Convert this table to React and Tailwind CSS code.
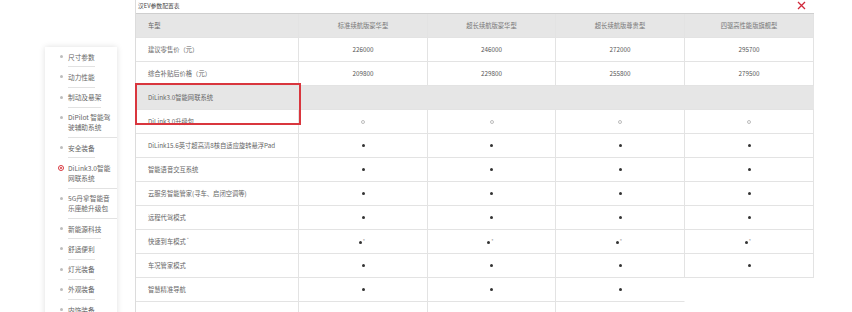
import React from 'react';

const menu = [
  { label: '尺寸参数' },
  { label: '动力性能' },
  { label: '制动及悬架' },
  { lines: ['DiPilot 智能驾', '驶辅助系统'] },
  { label: '安全装备' },
  { lines: ['DiLink3.0智能', '网联系统'], active: true },
  { lines: ['5G丹拿智能音', '乐座舱升级包'] },
  { label: '新能源科技' },
  { label: '舒适便利' },
  { label: '灯光装备' },
  { label: '外观装备' },
  { label: '内饰装备' },
];

const models = ['标准续航版豪华型', '超长续航版豪华型', '超长续航版尊贵型', '四驱高性能版旗舰型'];

const priceRows = [
  ['建议零售价（元）', '226000', '246000', '272000', '295700'],
  ['综合补贴后价格（元）', '209800', '229800', '255800', '279500'],
];

// o = hollow, d = dot, s = dot with note, '' = blank
const featureRows = [
  ['DiLink3.0升级包', ['o', 'o', 'o', 'o']],
  ['DiLink15.6英寸超高清8核自适应旋转悬浮Pad', ['d', 'd', 'd', 'd']],
  ['智能语音交互系统', ['d', 'd', 'd', 'd']],
  ['云服务智能管家(寻车、启闭空调等)', ['d', 'd', 'd', 'd']],
  ['远程代驾模式', ['d', 'd', 'd', 'd']],
  ['快速到车模式', ['s', 's', 's', 's'], true],
  ['车况管家模式', ['d', 'd', 'd', 'd']],
  ['智慧精准导航', ['d', 'd', 'd', ''], false, true],
  ['', ['', '', '', ''], false, true],
];

const Mark = ({ type }) => {
  if (type === 'o') return <span className="block w-[4px] h-[4px] rounded-full border border-[#bdbdbd]" />;
  if (type === 'd') return <span className="block w-[3px] h-[3px] rounded-full bg-[#333]" />;
  if (type === 's')
    return (
      <span className="flex items-start -ml-[2px]">
        <span className="block w-[3px] h-[3px] mt-[1px] rounded-full bg-[#333]" />
        <span className="text-[5px] leading-[5px] text-[#999] ml-[1px] -mt-[2px]">*</span>
      </span>
    );
  return null;
};

const Sidebar = () => (
  <div className="w-[135px] shrink-0 pt-[47px] pl-[45px]">
    <div className="w-[72px] bg-white shadow-[0_0_6px_rgba(0,0,0,0.13)] pb-[10px]">
      {menu.map((m, i) => (
        <div key={i} className="flex">
          <div className="w-[23px] shrink-0 flex justify-end pr-[4px] pt-[4.6px]">
            {m.active ? (
              <span className="mt-[2px] w-[6px] h-[6px] rounded-full border border-[#d9363e] flex items-center justify-center">
                <span className="w-[2.5px] h-[2.5px] rounded-full bg-[#d9363e]" />
              </span>
            ) : (
              <span className="mt-[3.5px] mr-[1px] w-[3px] h-[3px] rounded-full bg-[#bdbdbd]" />
            )}
          </div>
          <div
            className={`${m.lines ? 'w-[49px]' : ''} pt-[4.6px] pb-[4.7px] border-b border-[#e2e2e2] text-[6.7px] leading-[10px] text-[#666] whitespace-nowrap`}
          >
            {m.lines ? (
              <>
                {m.lines[0]}
                <br />
                {m.lines[1]}
              </>
            ) : (
              m.label
            )}
          </div>
        </div>
      ))}
    </div>
  </div>
);

const cell = 'h-[24px] flex items-center border-b border-r border-[#e3e3e3]';

const App = () => {
  return (
    <div className="w-[852px] h-[312px] overflow-hidden bg-white flex relative font-['Noto_Sans_CJK_SC',sans-serif]">
      <Sidebar />
      <div className="w-[679px] shrink-0 border-l border-[#dcdcdc] flex flex-col">
        <div className="h-[14px] shrink-0 flex items-center justify-between pl-[2px] pr-[8px] border-b border-[#cfcfcf]">
          <span className="text-[5.8px] text-[#444]">汉EV参数配置表</span>
          <svg width="9" height="9" viewBox="0 0 9 9" className="-mt-[2px]">
            <path d="M1 1 L8 8 M8 1 L1 8" stroke="#d0283a" strokeWidth="1.3" fill="none" />
          </svg>
        </div>
        <div className="grid shrink-0 grid-cols-[163px_129px_128px_129px_129px] text-[6.3px] text-[#666]">
          <div className={`${cell} bg-[#e6e6e6] pl-[12px] border-[#d8d8d8]`}>车型</div>
          {models.map((m) => (
            <div key={m} className={`${cell} bg-[#e6e6e6] justify-center border-[#d8d8d8] text-[#777]`}>
              {m}
            </div>
          ))}

          {priceRows.map((r) =>
            r.map((v, j) => (
              <div key={r[0] + j} className={`${cell} ${j === 0 ? 'pl-[12px]' : 'justify-center text-[#555]'}`}>
                {v}
              </div>
            ))
          )}

          <div className={`${cell} col-span-5 bg-[#e6e6e6] pl-[12px] border-r-0 border-[#d3d3d3] text-[#666]`}>
            DiLink3.0智能网联系统
          </div>

          {featureRows.map(([label, marks, note, cut], i) => (
            <React.Fragment key={i}>
              <div className={`${cell} pl-[12px]`}>
                {label}
                {note && <sup className="text-[4.5px] text-[#999] ml-[1px]">*</sup>}
              </div>
              {marks.map((t, j) => (
                <div
                  key={j}
                  className={`${cell} justify-center ${
                    cut && j === 3 ? 'border-transparent' : cut && j === 2 ? 'border-r-transparent' : ''
                  }`}
                >
                  <Mark type={t} />
                </div>
              ))}
            </React.Fragment>
          ))}
        </div>
      </div>
      <div className="absolute left-[135px] top-[83px] w-[166px] h-[42px] border-2 border-[#d9363e] pointer-events-none" />
    </div>
  );
};

export default App;
